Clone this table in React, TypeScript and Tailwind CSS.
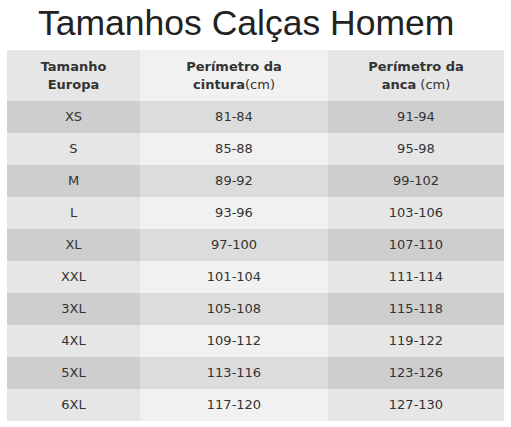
import React from "react";

const rows: [string, string, string][] = [
  ["XS", "81-84", "91-94"],
  ["S", "85-88", "95-98"],
  ["M", "89-92", "99-102"],
  ["L", "93-96", "103-106"],
  ["XL", "97-100", "107-110"],
  ["XXL", "101-104", "111-114"],
  ["3XL", "105-108", "115-118"],
  ["4XL", "109-112", "119-122"],
  ["5XL", "113-116", "123-126"],
  ["6XL", "117-120", "127-130"],
];

export default function App() {
  return (
    <div className="w-[511px] h-[427px] bg-white">
      <h1 className="pl-[38px] pt-[1px] h-[50px] text-[35.5px] leading-[44px] text-[#222] font-['Liberation_Sans',Arial,sans-serif]">
        Tamanhos Calças Homem
      </h1>
      <div className="ml-[7px] w-[497px] font-['DejaVu_Sans',Verdana,sans-serif] text-[13px] text-[#333]">
        <div className="grid grid-cols-[133px_188px_176px] h-[51px]">
          <div className="bg-[#e6e6e6] flex items-center justify-center text-center leading-[18px] font-bold">
            <span>
              Tamanho
              <br />
              Europa
            </span>
          </div>
          <div className="bg-[#f1f1f1] flex items-center justify-center text-center leading-[18px]">
            <span>
              <b>Perímetro da</b>
              <br />
              <b>cintura</b>(cm)
            </span>
          </div>
          <div className="bg-[#e6e6e6] flex items-center justify-center text-center leading-[18px]">
            <span>
              <b>Perímetro da</b>
              <br />
              <b>anca</b> (cm)
            </span>
          </div>
        </div>
        {rows.map((r, i) => {
          const odd = i % 2 === 0;
          return (
            <div key={r[0]} className="grid grid-cols-[133px_188px_176px] h-[32px]">
              <div className={`${odd ? "bg-[#cecece]" : "bg-[#e6e6e6]"} flex items-center justify-center`}>
                {r[0]}
              </div>
              <div className={`${odd ? "bg-[#dcdcdc]" : "bg-[#f1f1f1]"} flex items-center justify-center`}>
                {r[1]}
              </div>
              <div className={`${odd ? "bg-[#cecece]" : "bg-[#e6e6e6]"} flex items-center justify-center`}>
                {r[2]}
              </div>
            </div>
          );
        })}
      </div>
    </div>
  );
}
